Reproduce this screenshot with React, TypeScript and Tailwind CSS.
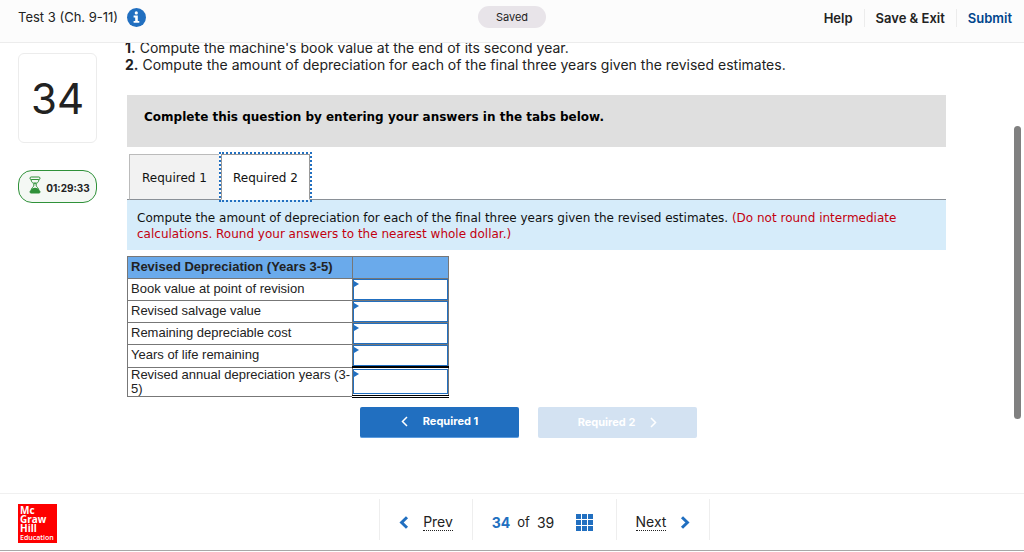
import React, { useState } from 'react';

const rows = [
  { id: 'book-value', label: 'Book value at point of revision' },
  { id: 'salvage-value', label: 'Revised salvage value' },
  { id: 'depreciable-cost', label: 'Remaining depreciable cost' },
  { id: 'years-remaining', label: 'Years of life remaining' },
  { id: 'annual-depreciation', label: <>Revised annual depreciation years (3-<wbr />5)</> },
];

function Header() {
  return (
    <header className="relative z-10 grid h-[43px] shrink-0 grid-cols-[1fr_auto_1fr] items-start border-b border-[#ececec] bg-[#fcfcfc] px-3 text-[#222]">
      <div className="flex items-center gap-[9px] pt-[7px] pl-[6px]">
        <h1 className="text-[13px] leading-5">Test 3 (Ch. 9-11)</h1>
        <button type="button" aria-label="Test information">
          <svg width="19" height="19" viewBox="0 0 19 19">
            <circle cx="9.5" cy="9.5" r="9.5" fill="#216fc0" />
            <circle cx="9.3" cy="4.9" r="1.6" fill="#fff" />
            <path d="M6.6 7.6h4.2v5.3h1.5v1.8H6.6v-1.8h1.6V9.4H6.6z" fill="#fff" />
          </svg>
        </button>
      </div>
      <div className="mt-[6px] rounded-full bg-[#e8e4e9] px-[18px] text-[11px] leading-[22px]">Saved</div>
      <nav className="mt-[9px] flex justify-end text-[13px] leading-[18px] font-semibold">
        <a href="#help" className="pr-[11px]">Help</a>
        <a href="#exit" className="border-l border-[#ececec] px-[11px]">Save &amp; Exit</a>
        <a href="#submit" className="border-l border-[#ececec] pl-[11px] text-[#00458c]">Submit</a>
      </nav>
    </header>
  );
}

function Sidebar() {
  return (
    <aside className="w-[79px] shrink-0 pt-[10px] text-[#222]">
      <div className="flex h-[90px] items-center justify-center rounded-md border border-[#ececec] text-[42px]">34</div>
      <div className="mt-[27px] flex h-[33px] items-center justify-center gap-[5px] rounded-[14px] border border-[#2f9139] bg-[#f4f8f4] pl-1">
        <svg width="12" height="18" viewBox="0 0 12 18" fill="none" stroke="#2f9139" className="mb-1">
          <rect x="1" y="1" width="10" height="2.5" rx="1.2" />
          <path d="M2 3.5c0 2.8 3 3.7 3 5.5s-3 3-3 6M10 3.5c0 2.8-3 3.7-3 5.5s3 3 3 6" />
          <path d="M4 6.5h4L6 8.5z" fill="#2f9139" stroke="none" />
          <path d="M2 15c0-2 2-3.2 4-3.2s4 1.2 4 3.2z" fill="#2f9139" stroke="none" />
          <rect x="1" y="14.8" width="10" height="2.2" rx="1" fill="#2f9139" />
        </svg>
        <span className="pt-1 text-[10px] font-bold">01:29:33</span>
      </div>
    </aside>
  );
}

function AnswerTable() {
  const [answers, setAnswers] = useState<Record<string, string>>({});

  return (
    <table className="mt-[6px] w-[322px] table-fixed border-collapse font-['Liberation_Sans',Arial,sans-serif] text-[13px] leading-[14px] text-[#222]">
      <colgroup>
        <col className="w-[225px]" />
        <col />
      </colgroup>
      <thead>
        <tr className="h-[22px] bg-[#6aaaeb]">
          <th className="border border-[#777] pb-[2px] pl-[3px] text-left font-bold">Revised Depreciation (Years 3-5)</th>
          <td className="border border-[#777]"></td>
        </tr>
      </thead>
      <tbody>
        {rows.map((row, i) => {
          const last = i === rows.length - 1;
          return (
            <tr key={row.id} className={last ? 'h-[29px]' : 'h-[22px]'}>
              <th scope="row" className={last ? 'border border-[#777] p-0 pl-[3px] text-left font-normal' : 'border border-[#777] pb-[2px] pl-[3px] text-left font-normal'}>
                <label htmlFor={row.id}>{row.label}</label>
              </th>
              <td className={last ? 'border border-t-2 border-b-3 border-[#777] border-t-black border-b-black p-0 [border-bottom-style:double]' : 'border border-[#777] p-0'}>
                <div className={last ? 'relative h-[25px] border border-[#216fc0] bg-white' : 'relative h-[21px] border border-[#216fc0] bg-white'}>
                  <input
                    id={row.id}
                    value={answers[row.id] || ''}
                    onChange={(e) => setAnswers({ ...answers, [row.id]: e.target.value })}
                    className="block h-full w-full border-0 bg-transparent px-2"
                  />
                  <svg width="5" height="6" viewBox="0 0 5 6" className="absolute top-px left-0">
                    <path d="M0 0l5 3-5 3z" fill="#216fc0" />
                  </svg>
                </div>
              </td>
            </tr>
          );
        })}
      </tbody>
    </table>
  );
}

function Question() {
  return (
    <section className="min-w-0 flex-1">
      <div className="-mt-1 text-[14px] leading-[17px] text-[#222]">
        <p><b>1.</b> Compute the machine's book value at the end of its second year.</p>
        <p><b>2.</b> Compute the amount of depreciation for each of the final three years given the revised estimates.</p>
      </div>

      <div className="pl-[2px] font-['DejaVu_Sans',Verdana,sans-serif]">
        <div className="mt-[22px] h-[52px] bg-[#dfdfdf] px-[17px] pt-[13px] text-[12px] leading-[18px] font-bold text-black">
          Complete this question by entering your answers in the tabs below.
        </div>

        <div role="tablist" className="mt-[7px] flex gap-[2px] border-b border-[#8a9097] pl-[2px] text-[12px] text-[#111]">
          <button type="button" role="tab" aria-selected="false" className="-mb-px h-[46px] w-[90px] border-t border-b border-l border-[#bbb] border-b-[#8a9097] bg-[#f2f2f2] pt-[2px]">
            Required 1
          </button>
          <button type="button" role="tab" aria-selected="true" className="-mb-px h-[46px] w-[89px] border border-b-white border-[#999] bg-white pt-[2px] outline-2 outline-[#216fc0] outline-dotted">
            Required 2
          </button>
        </div>

        <div className="min-h-[50px] bg-[#d6ecfa] px-[10px] pt-[10px] pb-2 text-[12px] leading-4 text-[#111]">
          Compute the amount of depreciation for each of the final three years given the revised estimates.{' '}
          <span className="text-[#c3000f]">(Do not round intermediate calculations. Round your answers to the nearest whole dollar.)</span>
        </div>

        <AnswerTable />
      </div>

      <div className="mt-[9px] flex justify-center gap-[19px] pr-[14px] text-[11px] font-bold text-white">
        <button type="button" className="flex h-[31px] w-[159px] items-center justify-center gap-[15px] rounded-xs border-b border-[#5c9cdf] bg-[#216fc0]">
          <svg width="7" height="11" viewBox="0 0 7 11" fill="none" stroke="currentColor" strokeWidth="1.5">
            <path d="M6 1L1.5 5.5 6 10" />
          </svg>
          Required 1
        </button>
        <button type="button" disabled className="flex h-[31px] w-[159px] items-center justify-center gap-[15px] rounded-xs bg-[#d3e2f2]">
          Required 2
          <svg width="7" height="11" viewBox="0 0 7 11" fill="none" stroke="currentColor" strokeWidth="1.5">
            <path d="M1 1l4.5 4.5L1 10" />
          </svg>
        </button>
      </div>
    </section>
  );
}

function Footer() {
  return (
    <footer className="flex shrink-0 border-t border-b border-t-[#f0f0f0] border-b-[#a8a8a8] pb-[7px] text-[#222]">
      <div className="w-[65px] shrink-0 pt-[10px] pl-[18px]">
        <div className="h-[39px] w-[39px] bg-[#fe0000] pt-[2px] pl-[2px] font-['Open_Sans',sans-serif] text-[10px] leading-[9px] font-bold text-white">
          <div>Mc</div>
          <div>Graw</div>
          <div>Hill</div>
          <div className="text-[7px] font-semibold">Education</div>
        </div>
      </div>
      <nav aria-label="Questions" className="mx-auto mt-[5px] flex h-[41px] border-x border-[#eee] text-[14px]">
        <button type="button" className="flex w-[92px] items-center justify-center gap-[14px] pt-[6px]">
          <svg width="10" height="13" viewBox="0 0 10 13" fill="none" stroke="#216fc0" strokeWidth="3">
            <path d="M8 1.2L2.6 6.5 8 11.8" />
          </svg>
          <span className="border-b border-dotted border-[#222] leading-4">Prev</span>
        </button>
        <div className="flex w-[145px] items-center justify-center border-x border-[#eee] pt-[6px]">
          <b className="text-[#216fc0]">34</b>
          <span className="px-[7px] text-[13px]">of</span>
          <span>39</span>
          <button type="button" aria-label="Question list" className="mr-1 ml-[22px]">
            <svg width="17" height="17" viewBox="0 0 17 17" fill="#216fc0">
              <path d="M0 0h5v5H0zM6 0h5v5H6zM12 0h5v5h-5zM0 6h5v5H0zM6 6h5v5H6zM12 6h5v5h-5zM0 12h5v5H0zM6 12h5v5H6zM12 12h5v5h-5z" />
            </svg>
          </button>
        </div>
        <button type="button" className="flex w-[92px] items-center justify-center gap-[14px] pt-[6px]">
          <span className="border-b border-dotted border-[#222] leading-4">Next</span>
          <svg width="10" height="13" viewBox="0 0 10 13" fill="none" stroke="#216fc0" strokeWidth="3">
            <path d="M2 1.2l5.4 5.3L2 11.8" />
          </svg>
        </button>
      </nav>
    </footer>
  );
}

function App() {
  return (
    <div className="flex min-h-screen flex-col bg-white pb-px font-['Inter',sans-serif]">
      <Header />
      <main className="flex flex-1 pr-[3px] pl-[18px]">
        <Sidebar />
        <div className="flex min-w-0 flex-1 pr-[68px] pl-7">
          <Question />
        </div>
        <div className="mt-[83px] h-[293px] w-[7px] shrink-0 rounded-full bg-[#808080]"></div>
      </main>
      <Footer />
    </div>
  );
}

export default App;
